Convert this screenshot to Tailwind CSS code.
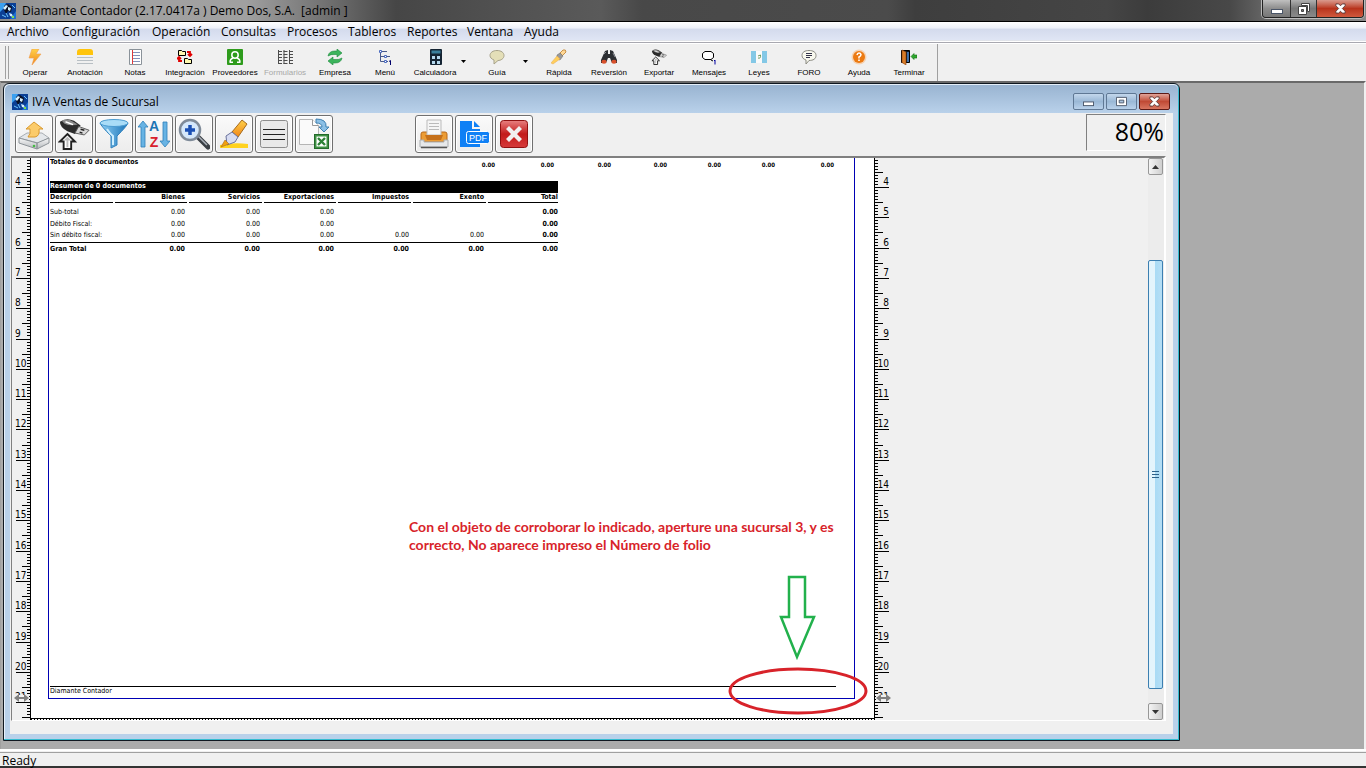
<!DOCTYPE html>
<html lang="es">
<head>
  <meta charset="UTF-8" />
  <meta name="viewport" content="width=device-width, initial-scale=1" />
  <title>Diamante Contador</title>
  <script src="https://cdn.jsdelivr.net/npm/@tailwindcss/browser@4"></script>
</head>
<body class="h-screen flex flex-col overflow-hidden bg-[#f0f0f0] text-black text-[12px] font-['Open_Sans','Noto_Sans',sans-serif]">

  <!-- formas compartidas -->
  <svg class="absolute size-0" aria-hidden="true">
    <defs>
      <linearGradient id="gOrange" x1="0" y1="0" x2="0" y2="1"><stop offset="0" stop-color="#ffd24a" /><stop offset="1" stop-color="#f08519" /></linearGradient>
      <linearGradient id="gBlue" x1="0" y1="0" x2="1" y2="0"><stop offset="0" stop-color="#8fd0f5" /><stop offset="1" stop-color="#1b74b8" /></linearGradient>
      <linearGradient id="gRed" x1="0" y1="0" x2="0" y2="1"><stop offset="0" stop-color="#e88080" /><stop offset=".5" stop-color="#c31b1b" /><stop offset="1" stop-color="#d63a3a" /></linearGradient>
      <linearGradient id="gMetal" x1="0" y1="0" x2="0" y2="1"><stop offset="0" stop-color="#f8f8f8" /><stop offset="1" stop-color="#b4b8bc" /></linearGradient>
      <symbol id="app" viewBox="0 0 16 16">
        <rect width="16" height="16" fill="#0b3f95" />
        <path d="M0 0h6L3 6 0 9z" fill="#3aa0f0" /><path d="M10 16l6-8v8z" fill="#1f6fd0" />
        <path d="M4 3l4-2 4 3-1 5-3-1-2 3-2-4z" fill="#0a1024" />
        <path d="M3 5l3-3 2 1-3 4zM8 4l3 1-1 3-2-1zM9 10l3 1 1 3-3-1z" fill="#d6f1ff" />
        <path d="M12 2l3 3M2 12l4 2M6 10l2 4" stroke="#6cc6ff" fill="none" />
        <path d="M12 13h2v2h-2z" fill="#7ee04a" />
      </symbol>
      <symbol id="usb" viewBox="0 0 34 34">
        <path d="M2 4Q9-1 17 3l7 5-6 9-8-3Q2 10 2 4z" fill="#2b2b2b" />
        <path d="M4 3q6-3 12 1l5 3q-8 2-14-1z" fill="#8a8a8a" />
        <path d="M8 4l8 3" stroke="#fff" stroke-width="1.5" />
        <path d="M22 9l11 4-5 5-10-2z" fill="#d8d8d8" stroke="#555" />
        <path d="M24 12l4 1M23 15l3 1" stroke="#222" stroke-width="1.5" />
        <path d="M10 17l8 8h-4v8H6v-8H2z" fill="#fff" stroke="#222" stroke-width="2" />
        <path d="M10 20l4 4h-3v7H9v-7H6z" fill="#bbb" />
      </symbol>
      <symbol id="minimize" viewBox="0 0 12 12"><rect x=".5" y="6.500" width="11" height="4" fill="#fff" stroke="#4a5568" /></symbol>
      <symbol id="cross" viewBox="0 0 12 12"><path d="M1 1h3l2 2 2-2h3v2L8 6l3 3v2H8L6 9l-2 2H1V9l3-3-3-3z" fill="#fff" stroke="#5b3a3a" /></symbol>
    </defs>
  </svg>

  <header class="h-[22px] shrink-0 flex items-start justify-between border-b border-black bg-[linear-gradient(90deg,#8d8d8d_0%,#a2a2a2_6%,#a0a0a0_18%,#707070_24%,#464646_29%,#505050_36%,#5a5a5a_44%,#484848_47%,#4b4b4b_65%,#3e3e3e_67%,#454545_81%,#3c3c3c_84%,#484848_90%,#808080_95%,#8a8a8a_100%)]">
    <div class="flex items-center gap-[6px] h-[21px] pt-px">
      <svg class="size-4"><use href="#app" /></svg>
      <h1 class="whitespace-pre">Diamante Contador (2.17.0417a ) Demo Dos, S.A.  [admin ]</h1>
    </div>
    <div class="flex h-[18px] mr-[2px] border border-t-0 border-[#222] rounded-b-[4px] overflow-hidden shadow-[0_0_0_1px_#bbb]">
      <button aria-label="Minimizar" class="w-7 flex justify-center items-center bg-linear-to-b from-[#c0c0c0] via-[#8d8d8d] to-[#777] border-r border-[#333]"><svg class="size-3"><use href="#minimize" /></svg></button>
      <button aria-label="Restaurar" class="w-[26px] flex justify-center items-center bg-linear-to-b from-[#b0b0b0] via-[#777] to-[#8a8a8a] border-r border-[#333]">
        <svg class="size-3" viewBox="0 0 12 12"><path d="M3.500 .5h8v8h-2v-6h-6z" fill="#fff" stroke="#444" /><path d="M.5 3.500h8v8h-8z" fill="#fff" stroke="#444" /><path d="M3.500 6.500h2v2h-2z" fill="#777" stroke="#444" /></svg>
      </button>
      <button aria-label="Cerrar" class="w-[46px] flex justify-center items-center bg-linear-to-b from-[#d99a8e] via-[#b8331c] to-[#d0583c]"><svg class="size-[11px]"><use href="#cross" /></svg></button>
    </div>
  </header>

  <nav class="h-[21px] shrink-0 pl-[7px] flex items-center border-b border-[#a8a8b0] bg-[linear-gradient(180deg,#fff_0%,#eef1f9_30%,#d4dbed_36%,#dfe5f4_88%,#b6bccc_89%,#fff_95%)]">
    <button class="w-[55px] text-left">Archivo</button>
    <button class="w-[90px] text-left">Configuración</button>
    <button class="w-[69px] text-left">Operación</button>
    <button class="w-[66px] text-left">Consultas</button>
    <button class="w-[61px] text-left">Procesos</button>
    <button class="w-[59px] text-left">Tableros</button>
    <button class="w-[60px] text-left">Reportes</button>
    <button class="w-[57px] text-left">Ventana</button>
    <button class="w-[50px] text-left">Ayuda</button>
  </nav>

  <!-- barra de herramientas principal -->
  <div class="h-[38px] shrink-0 flex border-t border-white">
    <div class="w-1 my-[2px] ml-[5px] mr-[1px] border-x border-[#a0a0a0]"></div>
    <div class="flex border-r border-[#a0a0a0] pr-[3px] text-[8px]/[10px] font-['Liberation_Sans',Arial,sans-serif] [&>button]:w-[50px] [&>button]:flex [&>button]:flex-col [&>button]:items-center [&>button]:gap-[3px] [&>button]:pt-[5px] [&_svg]:size-4 [&_svg]:shrink-0">
      <button><svg viewBox="0 0 16 16"><path d="M5 0h7L9 5h5L5 16l2-7H2z" fill="url(#gOrange)" stroke="#f0a050" stroke-width=".6" /></svg>Operar</button>
      <button><svg viewBox="0 0 16 16"><path d="M0 6V3q0-3 3-3h10q3 0 3 3v3z" fill="#ffc40c" /><path d="M0 8.500h16M0 11.500h16M0 14.500h16" stroke="#b8bfc4" /></svg>Anotación</button>
      <button><svg viewBox="0 0 16 16"><path d="M2.500 .5h12v15h-12z" fill="#fff" stroke="#8a9299" /><path d="M5.500 1v14" stroke="#e03a3a" /><path d="M6 3.500h7M6 6.500h7M6 9.500h7M6 12.500h7" stroke="#8492bb" /></svg>Notas</button>
      <button><svg viewBox="0 0 16 16"><path d="M1.500 1.500h3l1 1h3v4h-7zM7.500 9.500h3l1 1h3v4h-7z" fill="#fff8b0" stroke="#000" /><path d="M10 3h3v4M11 5l2 2 2-2M5 12H2V9M0 10l2-2 2 2" fill="none" stroke="#e00000" stroke-width="1.800" /></svg>Integración</button>
      <button><svg viewBox="0 0 16 16"><rect width="16" height="16" rx="1" fill="#2e9b1c" /><circle cx="8" cy="6" r="3.200" fill="#2e9b1c" stroke="#fff" stroke-width="1.500" /><path d="M3 13q0-3 3-4M13 13q0-3-3-4M2.500 13.200H6M10 13.200h3.500" fill="none" stroke="#fff" stroke-width="1.400" /></svg>Proveedores</button>
      <button class="text-[#a8a8a8]"><svg viewBox="0 0 16 16"><path d="M1 2.500h4M6.500 2.500h4M12 2.500h4M1 5.500h4M6.500 5.500h4M12 5.500h4M1 8.500h4M6.500 8.500h4M12 8.500h4M1 11.500h4M6.500 11.500h4M12 11.500h4M1 14.500h4M6.500 14.500h4M12 14.500h4M1.500 1v14M7 1v14M12.500 1v14" stroke="#4c4c4c" /></svg>Formularios</button>
      <button><svg viewBox="0 0 16 16"><path d="M1 7q1-5 7-5h2V0l5 4-5 4V5.500H8Q4 5 1 7zM15 9q-1 5-7 5H6v2l-5-4 5-4v2.500h2q4 .5 7-1.500z" fill="#3cb45c" stroke="#1d8a3c" stroke-width=".6" /></svg>Empresa</button>
      <button><svg viewBox="0 0 16 16"><path d="M3.500 4v8.500H7M3.500 7.500H7" fill="none" stroke="#4a5a8a" /><path d="M2.500 1.500h2v2h-2zM7.500 6.500h2v2h-2zM7.500 11.500h2v2h-2z" fill="#fff" stroke="#4a6ac0" /><path d="M5 2.500h5M10 7.500h3M10 12.500h1" stroke="#4a5a8a" /><path d="M12 12.500l1.500-1V16" fill="none" stroke="#00006a" /></svg>Menú</button>
      <button><svg viewBox="0 0 16 16"><rect x="3" width="12" height="16" rx="1" fill="#152433" /><path d="M4.500 1.500h9v3h-9z" fill="#3a7f9c" /><path d="M5 7h3v3H5zM10 7h3v3h-3zM5 12h3v3H5zM10 12h3v3h-3z" fill="#b5d8ee" /></svg>Calculadora</button>
      <span class="w-[12px] pt-[15px] pl-px"><svg class="!size-[5px] block" viewBox="0 0 5 3"><path d="M0 0h5L2.500 3z" /></svg></span>
      <button><svg viewBox="0 0 16 16"><path d="M8 1.500c4 0 7 2 7 5s-3 5-6 5L5 15v-4C2.500 10 1 8.500 1 6.500c0-3 3-5 7-5z" fill="#e4dfb8" stroke="#a7a28a" /></svg>Guía</button>
      <span class="w-[12px] pt-[15px] pl-px"><svg class="!size-[5px] block" viewBox="0 0 5 3"><path d="M0 0h5L2.500 3z" /></svg></span>
      <button><svg viewBox="0 0 16 16"><path d="M9 4l3-3q3-1 3 2l-4 4z" fill="#ffd896" stroke="#c8924a" /><path d="M6 6l3-2 3 3-3 4-3-1z" fill="#999" stroke="#666" stroke-width=".5" /><path d="M0 14l6-7 3 3-7 5z" fill="#ffcf5c" stroke="#e8a850" stroke-width=".5" /></svg>Rápida</button>
      <button><svg viewBox="0 0 16 16"><path d="M4 2l3-1v4h2V1l3 1 4 9v3h-5l-2-5H7l-2 5H0v-3z" fill="#2c2f33" /><path d="M3 5l2-2M12 4l2 4" stroke="#8c9096" /><ellipse cx="3" cy="12.800" rx="2.600" ry="2" fill="#d8502c" /><ellipse cx="13" cy="12.800" rx="2.600" ry="2" fill="#d8502c" /></svg>Reversión</button>
      <button><svg><use href="#usb" /></svg>Exportar</button>
      <button><svg viewBox="0 0 16 16"><path d="M4 2.500h6l2.500 2v4l-2.500 2H4l-2.500-2v-4z" fill="#fff" stroke="#000" /><path d="M10 11l2 1" stroke="#000" /><path d="M13 12l1-1v4.500" fill="none" stroke="#0000a0" /></svg>Mensajes</button>
      <button><svg viewBox="0 0 16 16"><path d="M0 2h5v12H0zM11 2h5v12h-5z" fill="#84c8e6" /><path d="M5 2h6v12H5z" fill="#fafafa" /><path d="M7 9q3 1 2.500-3L7 7" fill="none" stroke="#6c9a5c" /></svg>Leyes</button>
      <button><svg viewBox="0 0 16 16"><path d="M8 1.500c4 0 7 1.500 7 5s-3 5-7 5L5 15v-4C2.500 10 1 9 1 6.500c0-3.500 3-5 7-5z" fill="#f8f8ee" stroke="#8b8b82" /><path d="M5 4.500h6M5 6.500h6M5 8.500h4" stroke="#33334a" /></svg>FORO</button>
      <button><svg viewBox="0 0 16 16"><circle cx="8" cy="8" r="7.500" fill="#f5d2b2" /><circle cx="8" cy="8" r="6" fill="#ec7a12" /><path d="M6 6q.5-2 2-2t2 1.500Q10 7 8 8v1.500" fill="none" stroke="#fff" stroke-width="1.500" /><path d="M7.200 10.500h1.600V12H7.200z" fill="#fff" /></svg>Ayuda</button>
      <button><svg viewBox="0 0 16 16"><path d="M.5 1.500h8v12h-8z" fill="#101820" stroke="#000" /><path d="M1 1l4 2v13l-4-2.500z" fill="#d87c28" stroke="#8a4210" stroke-width=".6" /><path d="M6 3h2v10H6z" fill="#4070a8" /><path d="M10 7.500l3-3V6h3v3h-3v1.500z" fill="#2fa72f" stroke="#127012" stroke-width=".6" /></svg>Terminar</button>
    </div>
  </div>

  <!-- area MDI -->
  <main class="relative flex-1 min-h-0 bg-[#ababab] border-t-2 border-t-[#696969] border-l border-l-[#a0a0a0] border-r-2 border-r-[#f0f0f0]">
    <section class="absolute left-[2px] top-0 bottom-[8px] w-[1177px] flex flex-col bg-[#b9d1ea] border border-[#101820] rounded-t-[6px] shadow-[inset_-1px_-1px_0_#35bcd0,inset_1px_1px_0_#e6f0fa] px-[6px] pb-[6px]">
      <div class="-mx-[5px] mt-px h-[28px] shrink-0 flex items-center justify-between rounded-t-[5px] pl-[7px] pr-[8px] pt-[5px] bg-linear-to-b from-[#99b4d1] to-[#b9d1ea]">
        <div class="flex items-center gap-[4px]">
          <svg class="size-4"><use href="#app" /></svg>
          <h2>IVA Ventas de Sucursal</h2>
        </div>
        <div class="flex gap-[2px]">
          <button aria-label="Minimizar ventana" class="w-[31px] h-[17px] flex items-center justify-center rounded-[2px] border border-[#5f7894] bg-linear-to-b from-[#c3d7ec] via-[#9ab8d6] to-[#b9d1ea]"><svg class="size-[11px]"><use href="#minimize" /></svg></button>
          <button aria-label="Maximizar ventana" class="w-[31px] h-[17px] flex items-center justify-center rounded-[2px] border border-[#5f7894] bg-linear-to-b from-[#c3d7ec] via-[#9ab8d6] to-[#b9d1ea]"><svg class="size-[11px]" viewBox="0 0 12 12"><path d="M.5 1.500h11v9H.5z" fill="#fff" stroke="#4a5568" /><path d="M3.500 4.500h5v3h-5z" fill="#a9c3de" stroke="#4a5568" /></svg></button>
          <button aria-label="Cerrar ventana" class="w-[31px] h-[17px] flex items-center justify-center rounded-[2px] border border-[#5c1a16] bg-linear-to-b from-[#e0a399] via-[#c04a35] to-[#d87560]"><svg class="size-[11px]"><use href="#cross" /></svg></button>
        </div>
      </div>

      <div class="flex-1 min-h-0 flex flex-col bg-[#f0f0f0] pb-[13px] pr-[7px]">
        <div class="h-[43px] shrink-0 flex pt-[2px] pl-[5px]">
          <div class="flex flex-1 gap-[2px] [&>button]:size-[38px] [&>button]:flex [&>button]:items-center [&>button]:justify-center [&>button]:border [&>button]:border-[#707070] [&>button]:rounded-[3px] [&>button]:bg-linear-to-b [&>button]:from-[#fafafa] [&>button]:to-[#ececec] [&>button]:shadow-[inset_0_0_0_1px_#fff] [&_svg]:size-[32px]">
            <button aria-label="Enviar">
              <svg viewBox="0 0 32 32"><path d="M1 20l8-5h15l7 5-11 5z" fill="#e4e7ea" stroke="#a8adb2" /><path d="M1 20l18 5v6L1 25zM19 25l12-5v5l-12 6z" fill="url(#gMetal)" stroke="#8e9499" /><path d="M16 4l9 7h-4q1 7-4 8h-7q3-3 2-8H8z" fill="#fbcb6a" stroke="#d9992e" /><circle cx="16" cy="28" r="1.300" fill="#4b4" /></svg>
            </button>
            <button aria-label="Exportar a USB"><svg><use href="#usb" /></svg></button>
            <button aria-label="Filtrar">
              <svg viewBox="0 0 32 32"><path d="M2 5q1 3 11 13v12l6-3v-9Q29 8 30 5z" fill="url(#gBlue)" stroke="#3181bd" /><ellipse cx="16" cy="5" rx="14" ry="3.500" fill="#a9dcf7" stroke="#4b9bd0" /><path d="M9 11q3 5 6 7v9" fill="none" stroke="#cdeeff" stroke-width="2" /></svg>
            </button>
            <button aria-label="Ordenar">
              <svg viewBox="0 0 32 32"><path d="M5 3l5 6H7v20H3V9H0zM27 29l5-6h-3V4h-4v19h-3z" fill="#67b3e4" stroke="#2d7fb8" stroke-width=".8" /><text x="16" y="13" font-size="14" font-weight="bold" text-anchor="middle" fill="#1c74b4" font-family="Liberation Sans">A</text><text x="16" y="29" font-size="14" font-weight="bold" text-anchor="middle" fill="#d8202c" font-family="Liberation Sans">Z</text></svg>
            </button>
            <button aria-label="Acercar">
              <svg viewBox="0 0 32 32"><path d="M20 19l10 10" stroke="#3a3f45" stroke-width="5" stroke-linecap="round" /><path d="M20 18l9 9" stroke="#a9b0b8" stroke-width="1.500" /><circle cx="12" cy="12" r="10" fill="#d5e8fb" stroke="#7f8b99" stroke-width="2.500" /><path d="M12 7v10M7 12h10" stroke="#1b50b4" stroke-width="3.500" /></svg>
            </button>
            <button aria-label="Resaltar">
              <svg viewBox="0 0 32 32"><path d="M2 27q14-3 28-1v4H2z" fill="#ffd21f" /><path d="M14 14L24 2l5 4-9 13z" fill="url(#gOrange)" stroke="#a56a1c" /><path d="M8 18l6-4 6 5-3 5-8 3z" fill="#d7dcf2" stroke="#6b739c" /><path d="M7 22l4 4-8 3z" fill="#f0a010" stroke="#a56a1c" stroke-width=".6" /></svg>
            </button>
            <button aria-label="Líneas">
              <svg viewBox="0 0 32 32"><rect x="2.500" y="2.500" width="27" height="27" rx="2" fill="#e9e9e9" stroke="#8c8c8c" /><path d="M5 11.500h22M5 16.500h22M5 21.500h22" stroke="#222" /></svg>
            </button>
            <button aria-label="Exportar a Excel">
              <svg viewBox="0 0 32 32"><path d="M1.500 1.500h13l6 6v19h-19z" fill="#fafafa" stroke="#b5b5b5" /><path d="M14.500 1.500v6h6" fill="#fff" stroke="#999" /><path d="M18 1q11 0 10 8h3l-5 5-5-5h3q0-4-6-4z" fill="#8cc0e6" stroke="#3f80b0" /><rect x="16.500" y="16.500" width="14" height="14" fill="#3f9144" stroke="#226a2a" /><path d="M18.500 18.500h10v10h-10z" fill="#fff" /><path d="M20 20l7 7M27 20l-7 7" stroke="#2c8036" stroke-width="2.400" /></svg>
            </button>
            <button aria-label="Imprimir" class="ml-[80px]">
              <svg viewBox="0 0 32 32"><path d="M3 16q0-2 2-2h22q2 0 2 2v8H3z" fill="#ec9c34" stroke="#b8691a" /><path d="M9 2h14v15H9z" fill="#f6f6f6" stroke="#bbb" /><path d="M11 5.500h10M11 8.500h10M11 11.500h10" stroke="#bbb" /><path d="M7 17h18l-2 5H9z" fill="#c5701a" /><path d="M2 22h4v2h20v-2h4v7H2z" fill="#e6e8ea" stroke="#a9adb0" /><path d="M3 29.500h26" stroke="#555" stroke-width="1.500" /></svg>
            </button>
            <button aria-label="Exportar a PDF">
              <svg viewBox="0 0 32 32"><path d="M2 3h12v8h8v18H2z" fill="#0f80f5" /><path d="M16 3l6 6h-6z" fill="#0f80f5" /><rect x="8.500" y="13.500" width="23" height="12" rx="2" fill="#0f80f5" stroke="#fff" /><text x="20" y="23" font-size="9" text-anchor="middle" fill="#fff" font-family="Liberation Sans">PDF</text></svg>
            </button>
            <button aria-label="Cerrar reporte">
              <svg viewBox="0 0 32 32"><rect x="2.500" y="2.500" width="27" height="27" rx="3" fill="url(#gRed)" stroke="#8f1010" /><path d="M8 11l3-3 5 5 5-5 3 3-5 5 5 5-3 3-5-5-5 5-3-3 5-5z" fill="#f1f1f1" /></svg>
            </button>
          </div>
          <output class="w-[80px] h-[37px] -mt-px pr-px text-right text-[25px]/[32px] border border-t-[#808080] border-l-[#808080] border-b-white border-r-white">80%</output>
        </div>

        <!-- vista previa -->
        <div class="flex-1 min-h-0 ml-px flex border-t-2 border-l border-r-2 border-b border-t-[#808080] border-l-[#808080] border-r-white border-b-white">
          <svg id="rulerLeft" class="w-[18px] h-full shrink-0 font-['DejaVu_Sans_Condensed','DejaVu_Sans',sans-serif]" font-size="10"></svg>
          <article class="relative w-[845px] shrink-0 flex flex-col bg-white border-x border-black pl-[17px] pr-[19px] pb-[21px] text-[7px]/[9px] font-['DejaVu_Sans_Condensed','DejaVu_Sans',sans-serif]">
            <div class="flex-1 flex flex-col border-x border-b border-[#0000b4] pl-[1px]">
              <table class="w-[786px] table-fixed font-bold text-[6px]/[8px]">
                <tr class="text-right align-top">
                  <th class="text-left text-[7px]/[8px] font-bold">Totales de 0 documentos</th>
                  <td class="w-[59px] pt-[3px]">0.00</td>
                  <td class="w-[59px] pt-[3px]">0.00</td>
                  <td class="w-[57px] pt-[3px]">0.00</td>
                  <td class="w-[56px] pt-[3px]">0.00</td>
                  <td class="w-[54px] pt-[3px]">0.00</td>
                  <td class="w-[54px] pt-[3px]">0.00</td>
                  <td class="w-[61px] pt-[3px] pr-[2px]">0.00</td>
                </tr>
              </table>
              <table class="w-[508px] mt-[12px] table-fixed text-right [&_td]:pr-[4px] [&_th:first-child]:text-left">
                <caption class="bg-black text-white font-bold text-left h-[12px] leading-[10px]">Resumen de 0 documentos</caption>
                <thead>
                  <tr>
                    <th class="w-[65px] pr-[2px]"><div class="border-b border-black">Descripción</div></th>
                    <th class="w-[74px] pr-[2px]"><div class="border-b border-black pr-[2px]">Bienes</div></th>
                    <th class="w-[75px] pr-[2px]"><div class="border-b border-black pr-[2px]">Servicios</div></th>
                    <th class="w-[74px] pr-[2px]"><div class="border-b border-black pr-[2px]">Exportaciones</div></th>
                    <th class="w-[75px] pr-[2px]"><div class="border-b border-black pr-[2px]">Impuestos</div></th>
                    <th class="w-[75px] pr-[2px]"><div class="border-b border-black pr-[2px]">Exento</div></th>
                    <th><div class="border-b border-black">Total</div></th>
                  </tr>
                </thead>
                <tbody class="[&_td]:h-[12px] [&_th]:font-normal [&_td:last-child]:font-bold [&_td:last-child]:pr-0">
                  <tr><td class="!h-[3px]" colspan="7"></td></tr>
                  <tr><th>Sub-total</th><td>0.00</td><td>0.00</td><td>0.00</td><td></td><td></td><td>0.00</td></tr>
                  <tr><th>Débito Fiscal:</th><td>0.00</td><td>0.00</td><td>0.00</td><td></td><td></td><td>0.00</td></tr>
                  <tr><th>Sin débito fiscal:</th><td>0.00</td><td>0.00</td><td>0.00</td><td>0.00</td><td>0.00</td><td>0.00</td></tr>
                </tbody>
                <tfoot class="font-bold border-t border-black [&_td]:h-[14px] [&_td:last-child]:pr-0">
                  <tr><th>Gran Total</th><td>0.00</td><td>0.00</td><td>0.00</td><td>0.00</td><td>0.00</td><td>0.00</td></tr>
                </tfoot>
              </table>
              <p class="w-[786px] mt-auto h-[12px] border-t border-black text-[7px]/[8px]">Diamante Contador</p>
            </div>
            <svg id="rulerBottom" class="absolute left-0 bottom-0 w-full h-[2px]"></svg>

            <!-- anotaciones -->
            <p class="absolute left-[378px] bottom-[166px] w-[450px] text-[14px]/[18px] font-bold text-[#d8232a] font-['Lato',sans-serif]">Con el objeto de corroborar lo indicado, aperture una sucursal 3, y es<br />correcto, No aparece impreso el Número de folio</p>
            <svg class="absolute left-[697px] bottom-[2px] w-[142px] h-[144px]" viewBox="0 0 142 144" fill="none">
              <path d="M61 3h16v40h9L69 83 53 43h8z" stroke="#22b14c" stroke-width="2.500" />
              <ellipse cx="70" cy="117" rx="68" ry="22" stroke="#d8232a" stroke-width="3" />
            </svg>
          </article>
          <svg id="rulerRight" class="w-[19px] h-full shrink-0 font-['DejaVu_Sans_Condensed','DejaVu_Sans',sans-serif]" font-size="10"></svg>
          <div class="flex-1"></div>
          <!-- barra de desplazamiento -->
          <div class="w-[16px] pr-px flex flex-col bg-[#ececec]">
            <button aria-label="Subir" class="h-[17px] flex items-center justify-center border border-[#979797] rounded-[2px] bg-linear-to-r from-[#f4f4f4] to-[#cfcfcf]"><svg class="w-[7px] h-[4px]" viewBox="0 0 7 4"><path d="M0 4l3.500-4L7 4z" fill="#333" /></svg></button>
            <div class="flex-[85]"></div>
            <div class="flex-[429] flex items-center justify-center border border-[#3c7fb1] rounded-[2px] bg-linear-to-r from-[#e3f4fc] from-45% via-[#a9dbf5] via-50% to-[#b5def5]">
              <svg class="w-[7px] h-2" viewBox="0 0 7 8"><path d="M0 1.500h7M0 4.500h7M0 7.500h7" stroke="#2c628b" /></svg>
            </div>
            <div class="flex-[14]"></div>
            <button aria-label="Bajar" class="h-[17px] flex items-center justify-center border border-[#979797] rounded-[2px] bg-linear-to-r from-[#f4f4f4] to-[#cfcfcf]"><svg class="w-[7px] h-[4px]" viewBox="0 0 7 4"><path d="M0 0l3.500 4L7 0z" fill="#333" /></svg></button>
          </div>
        </div>
      </div>
    </section>
  </main>

  <footer class="h-[19px] shrink-0 flex flex-col border-t-2 border-white border-b-2 border-b-[#333]">
    <p class="mt-px pl-[2px] border-t border-[#a0a0a0] leading-[15px]">Ready</p>
  </footer>

  <script>
    const CM = 30.3;
    const PRIMER_CM = 29; // posición de la marca 4

    function linea(x, y, w, h) {
      return `<rect x="${x}" y="${Math.round(y)}" width="${w}" height="${h}" />`;
    }

    function dibujarRegla(id, izquierda) {
      let out = "";
      for (let i = -9; i <= 175; i++) {
        const y = PRIMER_CM + (i * CM) / 10;
        if (y < 0) continue;
        const largo = i % 10 === 0 ? 14 : i % 5 === 0 ? 8 : 3;
        out += linea(izquierda ? 18 - largo : 0, y, largo, 1);
        if (i % 10 === 0) {
          const ancla = izquierda ? 'x="3"' : 'x="14" text-anchor="end"';
          out += `<text ${ancla} y="${Math.round(y) - 2}">${4 + i / 10}</text>`;
        }
      }
      // flecha del margen inferior
      const x = izquierda ? 2 : 1;
      out += `<rect x="${x}" y="537" width="15" height="6" fill="#f0f0f0" /><path d="M${x} 540l5-4v3h5v-3l5 4-5 4v-3h-5v3z" fill="#808080" />`;
      document.getElementById(id).innerHTML = out;
    }

    dibujarRegla("rulerLeft", true);
    dibujarRegla("rulerRight", false);

    let puntos = '<rect width="843" height="1" />';
    for (let x = 0; x < 843; x += 3) puntos += `<rect x="${x}" y="1" width="1" height="1" />`;
    document.getElementById("rulerBottom").innerHTML = puntos;
  </script>
</body>
</html>
